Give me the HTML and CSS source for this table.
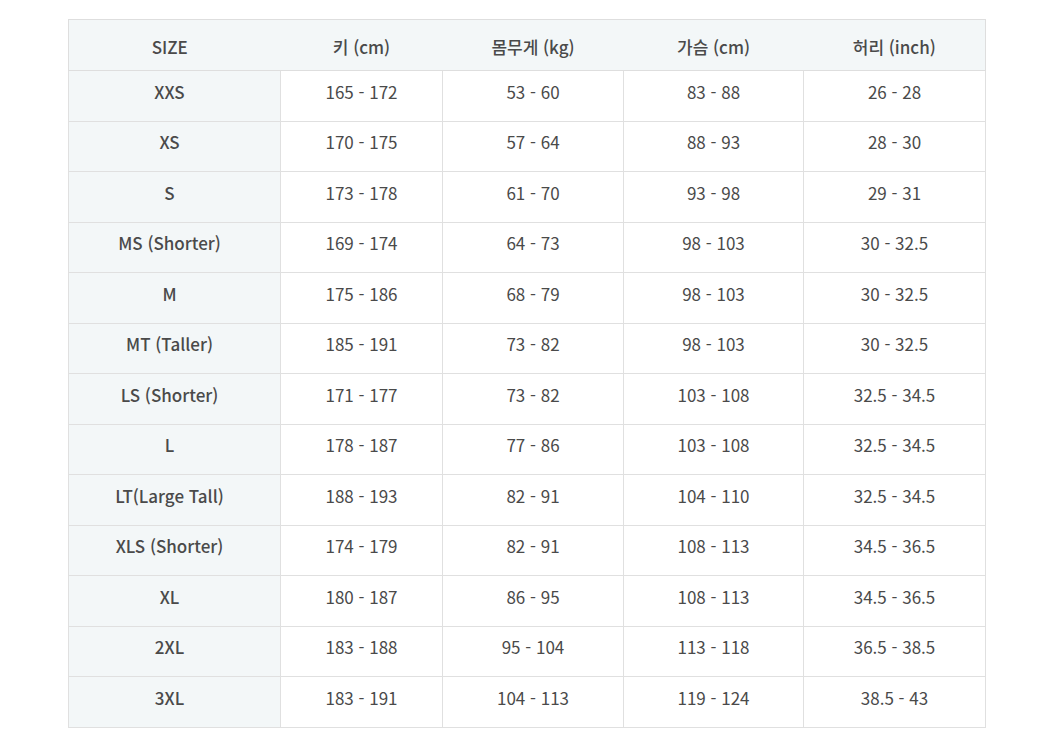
FILE: index.html
```html
<!DOCTYPE html>
<html lang="ko">
<head>
<meta charset="utf-8">
<title>Size chart</title>
<link rel="stylesheet" href="styles.css">
</head>
<body>
<div class="page">
  <table class="size-table">
    <colgroup>
      <col class="c1"><col class="c2"><col class="c3"><col class="c4"><col class="c5">
    </colgroup>
    <thead>
      <tr><th>SIZE</th><th>키 (cm)</th><th>몸무게 (kg)</th><th>가슴 (cm)</th><th>허리 (inch)</th></tr>
    </thead>
    <tbody>
      <tr><td>XXS</td><td>165 - 172</td><td>53 - 60</td><td>83 - 88</td><td>26 - 28</td></tr>
      <tr><td>XS</td><td>170 - 175</td><td>57 - 64</td><td>88 - 93</td><td>28 - 30</td></tr>
      <tr><td>S</td><td>173 - 178</td><td>61 - 70</td><td>93 - 98</td><td>29 - 31</td></tr>
      <tr><td>MS (Shorter)</td><td>169 - 174</td><td>64 - 73</td><td>98 - 103</td><td>30 - 32.5</td></tr>
      <tr><td>M</td><td>175 - 186</td><td>68 - 79</td><td>98 - 103</td><td>30 - 32.5</td></tr>
      <tr><td>MT (Taller)</td><td>185 - 191</td><td>73 - 82</td><td>98 - 103</td><td>30 - 32.5</td></tr>
      <tr><td>LS (Shorter)</td><td>171 - 177</td><td>73 - 82</td><td>103 - 108</td><td>32.5 - 34.5</td></tr>
      <tr><td>L</td><td>178 - 187</td><td>77 - 86</td><td>103 - 108</td><td>32.5 - 34.5</td></tr>
      <tr><td>LT(Large Tall)</td><td>188 - 193</td><td>82 - 91</td><td>104 - 110</td><td>32.5 - 34.5</td></tr>
      <tr><td>XLS (Shorter)</td><td>174 - 179</td><td>82 - 91</td><td>108 - 113</td><td>34.5 - 36.5</td></tr>
      <tr><td>XL</td><td>180 - 187</td><td>86 - 95</td><td>108 - 113</td><td>34.5 - 36.5</td></tr>
      <tr><td>2XL</td><td>183 - 188</td><td>95 - 104</td><td>113 - 118</td><td>36.5 - 38.5</td></tr>
      <tr><td>3XL</td><td>183 - 191</td><td>104 - 113</td><td>119 - 124</td><td>38.5 - 43</td></tr>
    </tbody>
  </table>
</div>
</body>
</html>
```

FILE: styles.css
```css
html, body {
  margin: 0;
  padding: 0;
  background: #ffffff;
}

.page {
  padding: 19px 0 0 68px;
}

.size-table {
  border-collapse: collapse;
  table-layout: fixed;
  width: 917px;
  font-family: "Noto Sans CJK KR", "Noto Sans", sans-serif;
  font-size: 17px;
  line-height: 20px;
  color: #4a4a4a;
  border: 1.5px solid #dedede;
}

.c1 { width: 212px; }
.c2 { width: 162px; }
.c3 { width: 181px; }
.c4 { width: 180px; }
.c5 { width: 182px; }

.size-table thead tr {
  height: 51px;
}

.size-table thead th {
  padding: 4px 0 0 0;
  background: #f3f7f8;
  font-weight: 500;
  text-align: center;
  vertical-align: middle;
  border-bottom: 1.5px solid #dedede;
}

.size-table thead th:first-child {
  padding-right: 10px;
}

.size-table tbody tr {
  height: 50.5px;
}

.size-table tbody td {
  padding: 0 0 8px 0;
  text-align: center;
  vertical-align: middle;
  border: 1.5px solid #e0e0e0;
  border-top: none;
}

.size-table tbody td:first-child {
  background: #f3f7f8;
  font-weight: 500;
  padding-right: 10px;
}
```
